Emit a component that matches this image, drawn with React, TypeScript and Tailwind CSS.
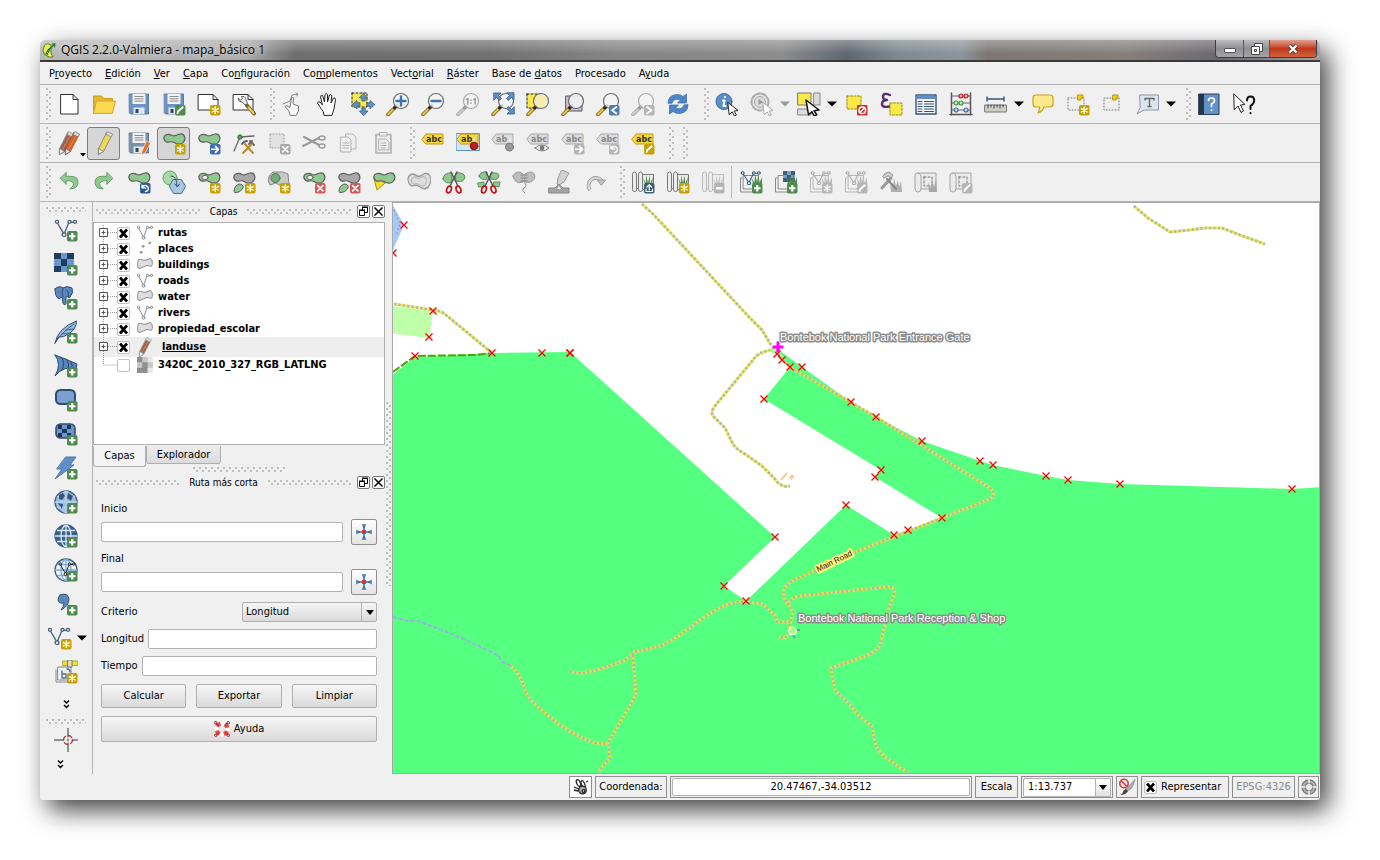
import React from 'react';
import type { ReactNode } from 'react';

type Tool = {
  label: string;
  icon?: ReactNode;
  kind?: 'handle' | 'drop' | 'dropOff' | 'line';
  pressed?: boolean;
  corner?: boolean;
};

const Icon = ({ children, size = 'size-6' }: { children: ReactNode; size?: string }) => (
  <svg viewBox="0 0 24 24" className={`${size} shrink-0`} fill="none" strokeLinecap="round" strokeLinejoin="round">
    {children}
  </svg>
);

const BLOB = 'M2 8C1 4 6 2 10 4.500C13 6 14 3.500 18 3C23 2.500 24 8 21.500 11C19.500 14 15 13.500 12 11.500C9 9.500 7 12 4.500 11Q2.500 10 2 8Z';
const VEC = 'M3 4.500L10 17L15 4.500H21';

const GREEN = '#8fc98f';
const GOLD = '#c8a000';
const OFF = '#b5b5b5';

// Small square in the lower right corner of an icon
const Badge = ({ c, s = 'star' }: { c: string; s?: 'star' | 'plus' | 'edit' | 'arrow' | 'x' | 'minus' | 'undo' | 'left' | 'right' | 'up' }) => (
  <g>
    <rect x="13" y="13" width="10.500" height="10.500" rx="1.800" fill={c} />
    <g stroke="#fff" strokeWidth="1.700">
      {s === 'star' && <path d="M18.250 15v6.500M15.300 16.600l5.900 3.400M21.200 16.600l-5.900 3.400" strokeWidth="1.400" />}
      {s === 'plus' && <path d="M18.250 15v6.500M15 18.250h6.500" strokeWidth="2.200" strokeLinecap="butt" />}
      {s === 'minus' && <path d="M15 18.250h6.500" strokeWidth="2.400" strokeLinecap="butt" />}
      {s === 'edit' && <path d="M15.600 21l.6-1.800 4.500-4" strokeWidth="2" />}
      {s === 'arrow' && <path d="M14.800 18.250h6.500M18.500 15.300l3 3-3 3" />}
      {s === 'x' && <path d="M15.600 15.600l5.300 5.300M20.900 15.600l-5.300 5.300" />}
      {s === 'undo' && <path d="M18.500 21.500a3 3 0 1 0-3-4M15 14.800v3h3M18.500 18.200h.2" strokeWidth="1.300" />}
      {s === 'left' && <path d="M20.500 15l-4.500 3.250 4.500 3.250" />}
      {s === 'right' && <path d="M16 15l4.500 3.250-4.500 3.250" />}
      {s === 'up' && <path d="M18.250 20v-5M16 17l2.250-2.300L20.500 17M15 19v2.500h6.500V19" strokeWidth="1.200" />}
    </g>
  </g>
);

const Sheet = () => (
  <path d="M1.500 2.500H16l5 5V18H1.500zM16 2.500v5h5" fill="#fff" stroke="#333" />
);

const Floppy = ({ c = '#6a93c3' }: { c?: string }) => (
  <g>
    <path d="M2.500 2h19v20H3.500l-1-1z" fill={c} stroke="#47698f" strokeWidth=".8" />
    <path d="M5.500 2h13v10h-13z" fill="#f2f2f2" />
    <path d="M7.500 4.500h9M7.500 6.800h9M7.500 9.100h9" stroke="#8b8b8b" strokeLinecap="butt" />
    <path d="M6.500 15.500h11V22h-11z" fill="#dfe5ec" />
    <path d="M8.500 17h3v4h-3z" fill="#2f4562" />
  </g>
);

const Blob = ({ c = GREEN, s = '#5c5c5c' }: { c?: string; s?: string }) => (
  <path d={BLOB} fill={c} stroke={s} strokeWidth="1.200" />
);

const Pencil = ({ c, dx = 0, tip = '#777' }: { c: string; dx?: number; tip?: string }) => (
  <g transform={`translate(${dx} 0)`}>
    <path d="M13 1.500l5 2.500-8.500 16.500-5 3 .3-6z" fill={c} stroke="#7d6a5c" strokeWidth=".7" />
    <path d="M4.800 17.500l4.700 3-5 3z" fill="#eee" stroke={tip} strokeWidth=".8" />
    <path d="M15.500 4L7.500 18.500" stroke="#fff" strokeOpacity=".35" strokeWidth=".8" />
    <path d="M13.500 1l-1.500 2.500 5 2.400L18.500 3.500z" fill="#d8dde2" stroke={tip} strokeWidth=".6" />
  </g>
);

const Lens = ({ off, children }: { off?: boolean; children?: ReactNode }) => (
  <g>
    <path d="M9.500 15L2 22.500" stroke={off ? '#aaa' : '#7b6523'} strokeWidth="3.600" />
    <path d="M9 15.500L2.200 22.300" stroke={off ? '#ccc' : '#f0c23c'} strokeWidth="2" />
    <path d="M11 13.500l-2.500 2.500" stroke={off ? '#999' : '#222'} strokeWidth="3" />
    <circle cx="15" cy="9" r="7.500" fill="#f4f4f6" fillOpacity=".85" stroke={off ? '#aaa' : '#6c6c6c'} strokeWidth="1.200" />
    {children}
  </g>
);

const Cursor = ({ off }: { off?: boolean }) => (
  <path d="M13 10.500l10 8-4 .6 2.400 3.900-2 1-2.200-4.200-2.700 2.800z" fill="#fff" stroke={off ? '#aaa' : '#222'} />
);

const Vec = ({ c = '#4a6178', t }: { c?: string; t?: string }) => (
  <g stroke={c} strokeWidth="1.300" transform={t}>
    <path d={VEC} />
    <circle cx="3" cy="4" r="1.600" fill="#eee" />
    <circle cx="10" cy="17.500" r="1.900" fill="#eee" />
    <circle cx="15.500" cy="4" r="1.600" fill="#eee" />
    <circle cx="21" cy="4" r="1.600" fill="#eee" />
  </g>
);

const Tag = ({ off, text = 'abc' }: { off?: boolean; text?: string }) => (
  <g>
    <path d="M1 8l4-5h17v10H5z" fill={off ? '#dcdcdc' : '#f5d93a'} stroke={off ? '#a8a8a8' : '#bd9a10'} />
    <text x="5" y="11" fontSize="8" fontWeight="bold" fontFamily="DejaVu Sans" fill={off ? '#888' : '#333'} className="select-none">
      {text}
    </text>
  </g>
);

const Maps = ({ off }: { off?: boolean }) => (
  <g stroke={off ? '#bbb' : '#777'} fill="#ececec">
    <path d="M11 4.500h11.500v15H11z" />
    <path d="M1.500 4q0-2 2-2t2 2v16q0 1.500-2 1.500t-2-1.500zM7.500 4q0-2 2-2t2 2v16q0 1.500-2 1.500t-2-1.500zM5.500 18.500h2" />
    <path d="M14 14l-2-6 3 5V5l2 8 2-8v9l3-7-1 8z" fill={off ? '#c4c4c4' : '#4f8a4f'} stroke="none" />
  </g>
);

const Grass = ({ c }: { c: string }) => (
  <path d="M14 15l-1-7 2.500 5L16 4l2 8 1.500-8 1 9L23 7v9z" fill={c} stroke="none" />
);

const Stack = ({ c = '#888' }: { c?: string }) => (
  <path d="M3 8H1.500v14H14M4.500 5.500h15V19h-15z" stroke={c} fill="none" />
);

const Roll = () => (
  <g stroke="#a4a4a4" fill="#ebebeb">
    <path d="M4 3h18v16H7V6q-1-3-3-3-3 0-3 2v14q0 3 3 3 3 0 3-3" />
    <path d="M10 7h8v9h-8z" strokeDasharray="2 2" stroke="#777" />
  </g>
);

const Globe = ({ fill = '#4c78ad', line = '#dce8f4' }: { fill?: string; line?: string }) => (
  <g stroke={line} strokeWidth="1.300">
    <circle cx="12" cy="12" r="11" fill={fill} stroke="#3c5f88" />
    <ellipse cx="12" cy="12" rx="5" ry="10.500" />
    <path d="M12 1.500v21M1.500 12h21M3.500 6.500h17M3.500 17.500h17" />
  </g>
);

const Scissors = () => (
  <g>
    <path d="M9 2l7 14M15 2L8 16" stroke="#555" strokeWidth="1.500" />
    <ellipse cx="7" cy="19.500" rx="2.200" ry="3.500" transform="rotate(20 7 19.500)" stroke="#c01818" strokeWidth="1.800" />
    <ellipse cx="16.500" cy="19.500" rx="2.200" ry="3.500" transform="rotate(-20 16.500 19.500)" stroke="#c01818" strokeWidth="1.800" />
  </g>
);

const UNDO = 'M8 3v4h5q9 0 8 8-1 6-9 6 5-3 4-6-1-3-5-3H8v4L1.500 9.500z';

const fileTools: Tool[] = [
  { label: 'Nuevo', icon: <path d="M4 2.500h12l5 5v14.500H4zM16 2.500v5h5" fill="#fff" stroke="#333" /> },
  { label: 'Abrir', icon: <><path d="M1.500 21V4h8l2 2.500h9V11" fill="#e5b82e" stroke="#c99b1c" /><path d="M1.500 21l3-12h19l-3 12z" fill="#fbd951" stroke="#d3a723" /></> },
  { label: 'Guardar', icon: <Floppy /> },
  { label: 'Guardar como', icon: <><Floppy /><Badge c="#4f8a4f" s="edit" /></> },
  { label: 'Nuevo diseñador', icon: <><Sheet /><Badge c={GOLD} /></> },
  { label: 'Administrador de diseñadores', icon: <><Sheet /><path d="M15 13.500l7 8" stroke="#7b6523" strokeWidth="4" /><path d="M16.500 15.500l5 5.500" stroke="#f0d060" strokeWidth="2" /><path d="M9.500 4.500q4-1 4.500 3l1.500 4-2.500 1.500-3-3q-4 0-4-4l2.500 2 2-1.500z" fill="#eee" stroke="#666" /></> },
  { label: 'h1', kind: 'handle' },
  { label: 'Desplazamiento táctil', icon: <><path d="M9 23l-1-4-4-4.500 1.500-1 3.500 2L10.500 6q1-2 2 0l-.5 6 5.500 2v5l-2 4z" fill="#fff" stroke="#777" /><path d="M2 12l7-3 2-6 5-1M15 1l2 1-1.500 2" stroke="#888" /></> },
  { label: 'Desplazar mapa', icon: <path d="M8 23q0-4-3-6.500L1.500 11Q2 9 4 10l2.500 3-2-8q0-2 2-1.500L8.500 10 9 2.500q1-2 2.500 0V10l2-7q1.500-1 2.300.5L15 11l2.500-5q2-.5 2 1.500L18 17l-2 6z" fill="#fff" stroke="#222" /> },
  { label: 'Desplazar a la selección', icon: <><path d="M1 1h15v14H1z" fill="#fbe94b" stroke="#222" strokeDasharray="2 2" /><path d="M12.500 1.500l4 4.500h-2.300v3h-3.400V6H8.500zM12.500 23.500l-4-4.500h2.300v-3h3.400v3h2.300zM1.500 12.500l4.500-4v2.300h3v3.400H6v2.300zM23.500 12.500l-4.500-4v2.300h-3v3.400h3v2.300z" fill="#5f8fc4" stroke="#2f5a8c" strokeWidth=".8" /></> },
  { label: 'Acercar zum', icon: <Lens><path d="M15 4.500v9M10.500 9h9" stroke="#3d73a8" strokeWidth="2.400" /></Lens> },
  { label: 'Alejar zum', icon: <Lens><path d="M10.500 9h9" stroke="#3d73a8" strokeWidth="2.400" /></Lens> },
  { label: 'Zum nativo', icon: <Lens off><path d="M10.500 7.500l1.300-1v5.500M17.800 7.500l1.300-1v5.500M15 8v.2M15 11v.2" stroke="#999" strokeWidth="1.500" /></Lens> },
  { label: 'Zum general', icon: <><Lens /><path d="M3 1h7L7.500 3.500l3 3-2 2-3-3L3 8zM23 1v7l-2.500-2.500-3 3-2-2 3-3L16 1zM23 22h-7l2.500-2.500-3-3 2-2 3 3L23 15z" fill="#5f8fc4" stroke="#2f5a8c" strokeWidth=".8" /></> },
  { label: 'Zum a la selección', icon: <><path d="M1 2h15v14H1z" fill="#fbe94b" stroke="#222" strokeDasharray="2 2" /><Lens><circle cx="15" cy="9" r="6" fill="#f5edb0" /></Lens></> },
  { label: 'Zum a la capa', icon: <><path d="M5 4h16v15H5z" fill="#c9c0cf" stroke="#5e5364" /><Lens /></> },
  { label: 'Zum anterior', icon: <><Lens /><Badge c="#4f7fb3" s="left" /></> },
  { label: 'Zum siguiente', icon: <><Lens off /><Badge c={OFF} s="right" /></> },
  { label: 'Actualizar', icon: <><path d="M2 11Q2 3 11 2.500q4 0 6 2L20.500 2v9h-9l3-3Q8 5.500 6 11z" fill="#4d86c8" stroke="#3668a6" strokeWidth=".7" /><path d="M22 13q0 8-9 8.500-4 0-6-2L3.500 22v-9h9l-3 3q6.500 2.500 8.500-3z" fill="#4d86c8" stroke="#3668a6" strokeWidth=".7" /></> },
  { label: 'h2', kind: 'handle' },
  { label: 'Identificar objetos', icon: <><circle cx="9" cy="9.500" r="8" fill="#5b8fc9" stroke="#3c6ca6" /><path d="M10 5v.2M8 8.500h1.500L8.500 14h2" stroke="#fff" strokeWidth="2" /><Cursor /></> },
  { label: 'Ejecutar acción', icon: <><circle cx="10" cy="10" r="8.500" stroke="#aaa" strokeWidth="2" strokeDasharray="4 2" fill="#e6e6e6" /><circle cx="10" cy="10" r="5.500" stroke="#aaa" fill="#ddd" /><path d="M8.500 7v6l4.500-3z" fill="#999" /><Cursor off /></> },
  { label: 'Acciones', kind: 'dropOff' },
  { label: 'Seleccionar objetos', icon: <><path d="M1 1h13v12H1z" fill="#fbe94b" stroke="#777" /><path d="M17 1h6v12h-6zM1 17h13v6H1z" fill="#dcdcdc" stroke="#888" /><path d="M9 8l13 10-5 .7 2.800 4-2.500 1.500-2.500-4.500-3.300 3z" fill="#fff" stroke="#111" strokeWidth="1.500" /></> },
  { label: 'Modos de selección', kind: 'drop' },
  { label: 'Deseleccionar todo', icon: <><path d="M3 4h14v13H3z" fill="#fbe94b" stroke="#a08a10" strokeDasharray="2 1.500" /><rect x="13" y="13" width="10.500" height="10.500" rx="1" fill="#d22f2f" /><circle cx="18.250" cy="18.250" r="3.300" stroke="#fff" strokeWidth="1.500" /><path d="M16 20.500l4.500-4.500" stroke="#fff" strokeWidth="1.500" /></> },
  { label: 'Seleccionar por expresión', icon: <><path d="M11 3Q4 0 4 5q0 2.500 4 3-5 0-5 4 0 4.500 9 2" stroke="#5c2d6e" strokeWidth="2.400" /><path d="M11 11h12v12H11z" fill="#fbe94b" stroke="#a08a10" strokeDasharray="2 1.500" /></> },
  { label: 'Abrir tabla de atributos', icon: <><path d="M2 3h20v19H2z" fill="#f2f4f8" stroke="#34557a" strokeWidth="1.400" /><path d="M2.500 3.500h19V7h-19z" fill="#5f8fc4" /><path d="M4 9.500h4M4 12h4M4 14.500h4M4 17h4M4 19.500h4M10.500 9.500h9M10.500 12h9M10.500 14.500h9M10.500 17h9M10.500 19.500h9" stroke="#34557a" /></> },
  { label: 'Calculadora de campos', icon: <><path d="M2.500 1v22M21.500 1v22M1 22.500h22" stroke="#555" strokeWidth="1.500" /><path d="M3 4h18M3 11h18M3 18h18" stroke="#666" /><g strokeWidth="1.200"><circle cx="12" cy="4" r="2" fill="#f4b0b0" stroke="#c01818" /><circle cx="17" cy="4" r="2" fill="#f4b0b0" stroke="#c01818" /><circle cx="7" cy="11" r="2" fill="#bfe6bf" stroke="#3d9a3d" /><circle cx="12" cy="11" r="2" fill="#bfe6bf" stroke="#3d9a3d" /><circle cx="7" cy="18" r="2" fill="#bcd8f0" stroke="#3c6ca6" /><circle cx="17" cy="18" r="2" fill="#bcd8f0" stroke="#3c6ca6" /></g></> },
  { label: 'Medir', icon: <><path d="M3 7h17M3 5v4M20 5v4" stroke="#34557a" strokeWidth="1.400" /><path d="M1 13h21.500v7H1z" fill="#cfcfc6" stroke="#777" /><path d="M4 13v3M7 13v2M10 13v3M13 13v2M16 13v3M19 13v2" stroke="#444" /></> },
  { label: 'Opciones de medida', kind: 'drop' },
  { label: 'Avisos del mapa', icon: <path d="M5 3h14q3 0 3 3v6q0 3-3 3h-6q-1 4-6 6 2-3 1.500-6H5q-3 0-3-3V6q0-3 3-3z" fill="#fbe98c" stroke="#caa21a" strokeWidth="1.200" /> },
  { label: 'Nuevo marcador', icon: <><path d="M2 6h16v12H2z" stroke="#777" strokeDasharray="1 2" /><path d="M12 3h5v3h-2v2h-3z" fill="#f5d000" stroke="#b59500" /><Badge c={GOLD} /></> },
  { label: 'Mostrar marcadores', icon: <><path d="M3 6h15v12H3z" stroke="#777" strokeDasharray="1 2" /><path d="M12 3h5v3h-2v2h-3z" fill="#f5d000" stroke="#b59500" /></> },
  { label: 'Anotación de texto', icon: <><path d="M4 3h18.500v15H8l-7 4 3-6z" fill="#dce4ee" stroke="#8d98a8" /><path d="M9 8V6.500h9V8M13.500 6.500v8M12 14.500h3" stroke="#666" strokeWidth="1.400" /></> },
  { label: 'Tipos de anotación', kind: 'drop' },
  { label: 'h3', kind: 'handle' },
  { label: 'Contenido de la ayuda', icon: <><path d="M2 2h20v20.500H2z" fill="#6292c6" stroke="#2c3f55" /><path d="M2 2h5v20.500H2z" fill="#23384f" /><path d="M11.500 8.500q0-2.500 3-2.500t3 2.500q0 2-3 3.500v2.500M14.500 18v.2" stroke="#fff" strokeWidth="1.700" /></> },
  { label: '¿Qué es esto?', icon: <><path d="M2 2l11 10.500-4.500.5L11.500 19 9 20.500 6 14l-3.500 3.500z" fill="#fff" stroke="#222" /><path d="M15 8.500q0-4 3.500-4 3.700 0 3.700 4 0 3-3.700 5.500v3M18.500 21v.3" stroke="#111" strokeWidth="2" /></> },
];

const editTools: Tool[] = [
  { label: 'Ediciones actuales', icon: <><Pencil c="#a0604a" dx={-2} /><Pencil c="#e05a1c" dx={4} tip="#555" /></>, corner: true },
  { label: 'Conmutar edición', icon: <Pencil c="#e6d84a" dx={2} />, pressed: true },
  { label: 'Guardar cambios de la capa', icon: <><Floppy c="#7d92a8" /><path d="M20 10l3.500 2L18 22l-3.500 2 .5-4z" fill="#e8702a" stroke="#fff" strokeWidth=".6" /></> },
  { label: 'Añadir objeto espacial', icon: <><Blob /><Badge c={GOLD} /></>, pressed: true },
  { label: 'Mover objeto espacial', icon: <><Blob /><Badge c="#3f6fae" s="arrow" /></> },
  { label: 'Herramienta de nodos', icon: <><path d="M2 20L8 6l14-1" stroke="#666" strokeWidth="1.300" /><circle cx="8" cy="6" r="2.200" fill="#5aa05a" stroke="#3a713a" /><path d="M13 13l8 9M19 14l-8 8" stroke="#c08a2a" strokeWidth="2" /><path d="M10 13q2-3 5-3M18 10l4 4M17 13l3-3" stroke="#666" strokeWidth="2" /></> },
  { label: 'Borrar lo seleccionado', icon: <><path d="M3 3h14v14H3z" stroke="#999" fill="#e2e2e2" strokeDasharray="1 2" /><Badge c="#a8a8a8" s="x" /></> },
  { label: 'Cortar objetos', icon: <g stroke="#999"><path d="M2 6l15 8M1 15l16-8" strokeWidth="2" /><ellipse cx="20" cy="7" rx="3" ry="2" strokeWidth="1.500" /><ellipse cx="20" cy="15" rx="3" ry="2" strokeWidth="1.500" /></g> },
  { label: 'Copiar objetos', icon: <g fill="#eee" stroke="#b5b5b5"><path d="M9 3h7l3 3v12H9z" /><path d="M4 6h7l3 3v12H4z" /><path d="M6 12h6M6 14.500h6M6 17h6" /></g> },
  { label: 'Pegar objetos', icon: <g fill="#eee" stroke="#b0b0b0"><path d="M4 3.500h15V22H4z" strokeWidth="1.600" /><path d="M8 1.500h7V5H8zM7 8h7l3 3v8H7z" /><path d="M9 12h5M9 14.500h5M9 17h4" /></g> },
  { label: 'h4', kind: 'handle' },
  { label: 'Opciones de etiquetado', icon: <Tag /> },
  { label: 'Fijar etiquetas', icon: <><path d="M.5 2.500h23v17H.5z" fill="#d7e4f5" stroke="#5f94d0" /><Tag text="ab" /><path d="M18 7v6" stroke="#ddd" strokeWidth="2" /><circle cx="18" cy="15" r="3.800" fill="#c02020" stroke="#801010" /></> },
  { label: 'Soltar etiquetas', icon: <><Tag off text="ab" /><path d="M19 8v6" stroke="#eee" strokeWidth="2" /><circle cx="18.500" cy="16" r="4" fill="#999" stroke="#777" /></> },
  { label: 'Mostrar etiquetas', icon: <><Tag off /><path d="M9 17q7-6 14 0-7 6-14 0z" fill="#eee" stroke="#777" /><circle cx="16" cy="17" r="2.300" fill="#777" /></> },
  { label: 'Mover etiqueta', icon: <><Tag off /><Badge c={OFF} s="arrow" /></> },
  { label: 'Rotar etiqueta', icon: <><Tag off /><Badge c={OFF} s="undo" /></> },
  { label: 'Cambiar etiqueta', icon: <><Tag /><Badge c={GOLD} s="edit" /></> },
  { label: 'h5', kind: 'handle' },
  { label: 'h6', kind: 'handle' },
];

const advTools: Tool[] = [
  { label: 'Deshacer', icon: <path d={UNDO} fill={GREEN} stroke="#4f8f57" strokeWidth=".9" transform="translate(2 0) scale(.9)" /> },
  { label: 'Rehacer', icon: <path d={UNDO} fill={GREEN} stroke="#4f8f57" strokeWidth=".9" transform="translate(22 0) scale(-.9 .9)" /> },
  { label: 'Rotar objetos', icon: <><Blob /><Badge c="#2c5a94" s="undo" /></> },
  { label: 'Simplificar objeto', icon: <><circle cx="8" cy="8" r="7" fill="#a9dba9" stroke="#5f9f66" /><path d="M12 9.500h8l4 7-4 7h-8l-4-7z" fill="#a8c8e0" stroke="#4a6f90" transform="translate(-.5 0)" /><path d="M9 6q6 0 6 10M13 14l2.300 3 2.200-3" stroke="#35506e" /></> },
  { label: 'Añadir anillo', icon: <><Blob /><ellipse cx="8" cy="7.500" rx="3.200" ry="2" fill="#fff" stroke="#5c5c5c" /><Badge c={GOLD} /></> },
  { label: 'Añadir parte', icon: <><Blob c="#a8a8a8" /><path d="M2 21q0-5 5-7 5 0 4 4-3 5-8 4.500z" fill={GREEN} stroke="#5c5c5c" /><Badge c={GOLD} /></> },
  { label: 'Rellenar anillo', icon: <><path d="M2 7q2-6 8-5 6-1 11 2l1 12-8 0-5-3-6 2q-3-4-1-8z" fill="#c8c8c8" stroke="#888" /><circle cx="8.500" cy="8" r="4.500" fill="#6fae79" stroke="#4c7a54" /><Badge c={GOLD} /></> },
  { label: 'Borrar anillo', icon: <><Blob /><ellipse cx="8" cy="7.500" rx="3.200" ry="2" fill="#fff" stroke="#5c5c5c" /><Badge c="#d05a5a" s="x" /></> },
  { label: 'Borrar parte', icon: <><Blob c="#a8a8a8" /><path d="M2 21q0-5 5-7 5 0 4 4-3 5-8 4.500z" fill={GREEN} stroke="#5c5c5c" /><Badge c="#d05a5a" s="x" /></> },
  { label: 'Remodelar objetos', icon: <><path d="M2 9l3 11 8-7z" fill="#f7d935" stroke="#b59500" /><Blob /></> },
  { label: 'Curva de desplazamiento', icon: <><path d={BLOB} fill="#ddd" stroke="#999" transform="translate(-1 -1) scale(1.080 1.500)" /><path d={BLOB} stroke="#aaa" transform="translate(3 4) scale(.72 .9)" /></> },
  { label: 'Dividir objetos', icon: <><path d="M1 9q1-7 9-6v9q-6 3-9-3zM14 3q8-1 9 4-1 6-9 4z" fill={GREEN} stroke="#5c8c60" /><Scissors /></> },
  { label: 'Dividir partes', icon: <><path d="M2 6q2-5 8-4v7q-6 2-8-3zM14 3q8-1 8 3-1 5-8 3zM1 13l6-1v5H2zM17 12h6l-1 5-5-1z" fill={GREEN} stroke="#5c8c60" /><Scissors /></> },
  { label: 'Combinar objetos', icon: <><path d="M1 6q4-7 10-2v8Q3 15 1 6zM13 4q8-5 10 2-1 8-10 6z" fill="#bdbdbd" stroke="#999" /><path d="M9 5h6M9 8h6M9 11h6M12 12q4 4 0 6-3 2 1 5" stroke="#888" /></> },
  { label: 'Combinar atributos', icon: <><path d="M15 0l7 3-5 9-5 3-2-1 1-6z" fill="#d2d2d2" stroke="#999" /><path d="M2 18h6l4-4 4 4h6v5H2z" fill="#a4a4a4" stroke="#888" /><path d="M12 16l2 3h-4z" fill="#eee" /></> },
  { label: 'Rotar símbolos', icon: <><path d="M8 20a7.500 7.500 0 1 1 12-9" stroke="#999" strokeWidth="3.800" strokeLinecap="butt" /><path d="M8 20a7.500 7.500 0 1 1 12-9" stroke="#d8d8d8" strokeWidth="2.200" strokeLinecap="butt" /><path d="M15.500 10h8l-4 5z" fill="#c4c4c4" stroke="#999" /></> },
  { label: 'h7', kind: 'handle' },
  { label: 'Abrir conjunto de mapas', icon: <><Maps /><Badge c="#3a5f7a" s="up" /></> },
  { label: 'Nuevo conjunto de mapas', icon: <><Maps /><Badge c={GOLD} /></> },
  { label: 'Cerrar conjunto de mapas', icon: <><Maps off /><Badge c={OFF} s="minus" /></> },
  { label: 's1', kind: 'line' },
  { label: 'Añadir vectorial GRASS', icon: <><Stack /><Vec c="#3a5f7a" t="translate(1 0) scale(.9 .75)" /><Grass c="#4f8a4f" /><Badge c="#4f8a4f" s="plus" /></> },
  { label: 'Añadir ráster GRASS', icon: <><Stack /><path d="M9 1h12v11H9z" fill="#3a5f7a" /><path d="M13 1h4v4h-4zM9 5h4v3H9zM17 5h4v3h-4z" fill="#7ba0bc" /><Grass c="#4f8a4f" /><Badge c="#4f8a4f" s="plus" /></> },
  { label: 'Nuevo vectorial GRASS', icon: <><Stack c={OFF} /><Vec c="#aaa" t="translate(1 0) scale(.9 .75)" /><Grass c="#bbb" /><Badge c={OFF} /></> },
  { label: 'Editar vectorial GRASS', icon: <><Stack c={OFF} /><Vec c="#aaa" t="translate(1 0) scale(.9 .75)" /><Grass c="#bbb" /><Badge c={OFF} s="edit" /></> },
  { label: 'Herramientas GRASS', icon: <><path d="M12 22l-1-11 3 6 1-9 2 8 2-6 1 7 2-6 1 11z" fill="#b0b0b0" /><path d="M3 18l9-10" stroke="#999" strokeWidth="3" /><path d="M4 6q2-4 6-4l4 3-2 3-3-2-4 2z" fill="#ccc" stroke="#999" /><path d="M8 9l9 10" stroke="#888" strokeWidth="2" /></> },
  { label: 'Mostrar región', icon: <><Roll /><path d="M15 22l-1-10 3 6 1-9 2 8 2-8 1 13z" fill="#a8a8a8" /></> },
  { label: 'Editar región', icon: <><Roll /><Badge c={OFF} s="edit" /></> },
];

const Plus = <Badge c="#4f8a4f" s="plus" />;

const layerTools: Tool[] = [
  { label: 'Añadir capa vectorial', icon: <><Vec t="scale(1 .95)" />{Plus}</> },
  { label: 'Añadir capa ráster', icon: <><path d="M0 1h20v19H0z" fill="#6a96c9" /><path d="M0 1h7v6H0zM13 1h7v6h-7zM7 7h6v7H7zM0 14h7v6H0zM13 14h7v6h-7z" fill="#1f3d63" />{Plus}</> },
  { label: 'Añadir capa PostGIS', icon: <><path d="M1 3q4-4 8-1 4-3 9 0 2 5-2 9l-1 1-1-2-2 1v7q-2 2-3-1l-1-6-3 2Q1 11 1 3z" fill="#5b88bb" stroke="#2c4d75" /><path d="M9 2q-2 5 0 9M13 4q3 3 1 7M5 6v.2" stroke="#2c4d75" />{Plus}</> },
  { label: 'Añadir capa SpatiaLite', icon: <><path d="M1 23Q4 8 22.500 1q0 8-8 13Q9 18 5 17z" fill="#9dbde0" stroke="#2c4d75" /><path d="M1 23Q8 12 20 4M8 14l8-1M12 10l7-1" stroke="#3d5f88" />{Plus}</> },
  { label: 'Añadir capa MSSQL', icon: <><path d="M1 1q11 4 22 9l-1 5q-12-4-21 7 7-12 0-21z" fill="#5b88bb" stroke="#2c4d75" /><path d="M7 3q5 6 1 13M12 5q4 5 2 9M17 8q2 3 1 7" stroke="#24466e" />{Plus}</> },
  { label: 'Añadir capa Oracle', icon: <><rect x="2" y="2" width="19" height="14" rx="4.500" fill="#7ba0d0" stroke="#2c4d75" strokeWidth="2" />{Plus}</> },
  { label: 'Añadir GeoRaster', icon: <><rect x="2" y="2" width="19" height="14" rx="4.500" fill="#6a96c9" stroke="#2c4d75" strokeWidth="1.600" /><path d="M4 3h4v4H4zM13 3h4v4h-4zM8 7h5v4H8zM4 11h4v4H4zM13 11h4v4h-4z" fill="#1f3557" />{Plus}</> },
  { label: 'Añadir capa SQL Anywhere', icon: <><path d="M12 1h10l-6 8h4L1 23l7-10H3z" fill="#5f8fc8" stroke="#4a78ae" />{Plus}</> },
  { label: 'Añadir capa WMS', icon: <><Globe fill="#9dbde0" line="#b9d0e8" /><path d="M5 5l4-2 2 3-3 4-3-1zM14 3l5 3-2 5-4-3zM4 13l5 1-1 5zM14 13l4 1-2 4z" fill="#35567c" />{Plus}</> },
  { label: 'Añadir capa WCS', icon: <><Globe fill="#35608f" />{Plus}</> },
  { label: 'Añadir capa WFS', icon: <><Globe fill="#f2f6fb" line="#7fa8d4" /><Vec c="#222" t="translate(4 3) scale(.75)" />{Plus}</> },
  { label: 'Añadir texto delimitado', icon: <><path d="M6 3q8-3 9 4 0 7-8 11 3-4 3-7-5 1-6-3 0-3 2-5z" fill="#5b88bb" stroke="#35567c" />{Plus}</> },
  { label: 'Nueva capa', icon: <><Vec t="translate(-1 0) scale(1 .95)" /><Badge c={GOLD} /></> },
  { label: 'Capa GPX', icon: <><path d="M2 10v12h13M4 7h13v13H4z" stroke="#888" /><path d="M9 1h15v4.500H9z" fill="#f0e020" stroke="#a89c10" strokeWidth=".8" /><path d="M14 0h4v7h-4z" fill="#ddd" stroke="#666" strokeWidth=".8" /><path d="M8 11v7h4v-4H8M13 9q3 0 3 3" stroke="#456c94" strokeWidth="1.300" /><Badge c={GOLD} /></> },
];

const DOTS_V = 'h-8 w-[5px] shrink-0 self-center bg-[radial-gradient(circle_at_1px_1px,#bdbdbd_1px,transparent_1px),radial-gradient(circle_at_4px_4px,#bdbdbd_1px,transparent_1px)] bg-[length:6px_6px]';
const DOTS_H = 'h-[5px] bg-[radial-gradient(circle_at_1px_1px,#bdbdbd_1px,transparent_1px),radial-gradient(circle_at_4px_4px,#bdbdbd_1px,transparent_1px)] bg-[length:6px_6px]';

const Caret = ({ off }: { off?: boolean }) => (
  <svg viewBox="0 0 10 6" className="h-[6px] w-[10px]">
    <path d="M0 .500h10L5 5.500z" fill={off ? '#9a9a9a' : '#000'} />
  </svg>
);

const Toolbar = ({ tools, label }: { tools: Tool[]; label: string }) => (
  <div role="toolbar" aria-label={label} className="flex h-[39px] items-center border-t border-[#b4b4b4] pl-[6px]">
    <span className={DOTS_V} />
    {tools.map((t) => {
      if (t.kind === 'handle') return <span key={t.label} className={`${DOTS_V} ml-[9px]`} />;
      if (t.kind === 'line') return <span key={t.label} className="mx-px h-8 w-px bg-[#b8b8b8]" />;
      if (t.kind === 'drop' || t.kind === 'dropOff') {
        return (
          <button key={t.label} aria-label={t.label} className="flex h-8 w-3 shrink-0 items-center justify-center">
            <Caret off={t.kind === 'dropOff'} />
          </button>
        );
      }
      return (
        <button
          key={t.label}
          aria-label={t.label}
          aria-pressed={t.pressed}
          className={
            t.pressed
              ? 'mx-px flex h-[33px] w-[33px] shrink-0 items-center justify-center rounded-[3px] border border-[#7d7d7d] bg-[#d6d6d6]'
              : 'relative flex h-8 w-[35px] shrink-0 items-center justify-center'
          }
        >
          <Icon>{t.icon}</Icon>
          {t.corner && (
            <svg viewBox="0 0 6 4" className="absolute right-0 bottom-[2px] h-1 w-[6px]">
              <path d="M0 0h6L3 3.500z" />
            </svg>
          )}
        </button>
      );
    })}
  </div>
);

// [text before the mnemonic, mnemonic, rest]
const menus = [
  ['P', 'r', 'oyecto'],
  ['', 'E', 'dición'],
  ['', 'V', 'er'],
  ['', 'C', 'apa'],
  ['Co', 'n', 'figuración'],
  ['Co', 'm', 'plementos'],
  ['Vect', 'o', 'rial'],
  ['', 'R', 'áster'],
  ['Base de ', 'd', 'atos'],
  ['Procesado', '', ''],
  ['A', 'y', 'uda'],
];

type Layer = { name: string; type: 'line' | 'point' | 'poly' | 'edit' | 'raster'; on: boolean };

const layers: Layer[] = [
  { name: 'rutas', type: 'line', on: true },
  { name: 'places', type: 'point', on: true },
  { name: 'buildings', type: 'poly', on: true },
  { name: 'roads', type: 'line', on: true },
  { name: 'water', type: 'poly', on: true },
  { name: 'rivers', type: 'line', on: true },
  { name: 'propiedad_escolar', type: 'poly', on: true },
  { name: 'landuse', type: 'edit', on: true },
  { name: '3420C_2010_327_RGB_LATLNG', type: 'raster', on: false },
];

const layerIcon = {
  line: <Icon size="size-4"><Vec c="#8a8a8a" t="translate(-1 -1) scale(1.080 1.150)" /></Icon>,
  point: <Icon size="size-4"><g stroke="#888" strokeWidth="1.500"><circle cx="6" cy="17" r="1.500" /><circle cx="9" cy="8" r="1.500" /><circle cx="19" cy="3" r="1.500" /></g></Icon>,
  poly: <Icon size="size-4"><path d="M2 4q3-2 8 1 6 0 10-3 4 3 3 9-1 4-3 3-3-2-6-1-5 2-9 4-4 1-4-3z" fill="#dedede" stroke="#8a8a8a" strokeWidth="1.500" /></Icon>,
  edit: <Icon size="size-5"><Pencil c="#a5644a" dx={1} tip="#6fa0d0" /></Icon>,
  raster: <Icon size="size-4"><path d="M0 0h24v24H0z" fill="#c8c8c8" /><path d="M0 0h8v8H0zM8 8h8v8H8zM0 16h16v8H0z" fill="#8f8f8f" /><path d="M16 0h8v8h-8zM16 16h8v8h-8z" fill="#e8e8e8" /></Icon>,
};

const CheckBox = ({ id, on, label }: { id: string; on: boolean; label: string }) => (
  <span className="grid size-[13px] shrink-0 place-items-center">
    <input
      id={id}
      type="checkbox"
      aria-label={label}
      defaultChecked={on}
      className="peer col-start-1 row-start-1 size-[13px] appearance-none rounded-[2px] border border-[#c0c0c0] bg-white"
    />
    <svg viewBox="0 0 9 9" className="pointer-events-none col-start-1 row-start-1 hidden size-[9px] peer-checked:block">
      <path d="M1 .500l7 8M8 .500l-7 8" stroke="#000" strokeWidth="2.800" />
    </svg>
  </span>
);

const LayerRow = ({ layer, last }: { layer: Layer; last: boolean }) => {
  const editing = layer.type === 'edit';
  return (
    <li className={`flex items-center pl-[5px] ${editing ? 'h-5 bg-[#eeeeee]' : 'h-4'}`}>
      <svg viewBox="0 0 18 20" className="h-full w-[18px] shrink-0" fill="none" stroke="#9a9a9a" preserveAspectRatio="xMidYMid slice">
        <path d={last ? 'M4.500 0v10H18' : 'M4.500 0v20M9 9.500h9'} strokeDasharray="1 1" />
        {!last && <path d="M.500 5.500h8v8h-8zM2.500 9.500h4M4.500 7.500v4" fill="#fff" stroke="#555" />}
      </svg>
      <CheckBox id={`layer-${layer.name}`} on={layer.on} label={layer.name} />
      <span className="ml-[3px] flex w-6 shrink-0 items-center justify-center">{layerIcon[layer.type]}</span>
      <label htmlFor={`layer-${layer.name}`} className={`ml-px text-[11px] font-bold ${editing ? 'pl-1 underline' : ''}`}>
        {layer.name}
      </label>
    </li>
  );
};

const DockHeader = ({ title }: { title: string }) => (
  <div className="flex h-[18px] items-center gap-[2px] pl-[3px]">
    <div className={`${DOTS_H} flex-1`} />
    <h2 className="px-2 text-[10px]">{title}</h2>
    <div className={`${DOTS_H} mr-1 flex-1`} />
    <button aria-label={`Desacoplar ${title}`} className="size-[13px] rounded-[2px] border border-[#777] bg-white">
      <svg viewBox="0 0 11 11" className="size-[11px]" fill="none" stroke="#000">
        <path d="M4.500 4V1.500h5v5H7M4 1h6M1.500 4.500h5v5h-5zM1 4h6" />
      </svg>
    </button>
    <button aria-label={`Cerrar ${title}`} className="size-[13px] rounded-[2px] border border-[#777] bg-white">
      <svg viewBox="0 0 11 11" className="size-[11px]" fill="none" stroke="#000" strokeWidth="1.500">
        <path d="M1.500 1.500l8 8M9.500 1.500l-8 8" />
      </svg>
    </button>
  </div>
);

const FIELD = 'h-5 min-w-0 flex-1 rounded-[2px] border border-[#b3b3b3] bg-white px-1 text-[11px]';
const BUTTON = 'flex items-center justify-center rounded-[2px] border border-[#b0b0b0] bg-linear-to-b from-[#f6f6f6] to-[#dadada] text-[11px]';

const PickPoint = ({ label }: { label: string }) => (
  <button aria-label={label} className="flex size-[26px] shrink-0 items-center justify-center rounded-[2px] border border-[#909090] bg-linear-to-b from-white to-[#e4e4e4]">
    <svg viewBox="0 0 16 16" className="size-4">
      <path d="M8 0v16M0 8h16" stroke="#3d9be0" strokeWidth="2" />
      <path d="M6 0l2 4 2-4M6 16l2-4 2 4M0 6l4 2-4 2M16 6l-4 2 4 2" fill="none" stroke="#555" strokeWidth=".8" />
      <path d="M6 6h4v4H6z" fill="#e03030" />
    </svg>
  </button>
);

const RoutePanel = () => (
  <form className="flex flex-col px-2 text-[11px]" onSubmit={(e) => e.preventDefault()}>
    <label htmlFor="inicio" className="mt-[10px] leading-4">Inicio</label>
    <div className="mt-[2px] flex items-center gap-2">
      <input id="inicio" className={FIELD} />
      <PickPoint label="Elegir inicio" />
    </div>
    <label htmlFor="final" className="mt-[6px] leading-4">Final</label>
    <div className="mt-[2px] flex items-center gap-2">
      <input id="final" className={FIELD} />
      <PickPoint label="Elegir final" />
    </div>
    <div className="mt-[7px] flex items-center justify-between">
      <label htmlFor="criterio">Criterio</label>
      <div className="grid h-5 w-[135px]">
        <select id="criterio" className="col-start-1 row-start-1 appearance-none rounded-[2px] border border-[#b0b0b0] bg-linear-to-b from-[#f6f6f6] to-[#dadada] px-[3px] text-[11px]">
          <option>Longitud</option>
        </select>
        <span className="pointer-events-none col-start-1 row-start-1 flex w-4 items-center justify-center justify-self-end border-l border-[#b0b0b0]">
          <svg viewBox="0 0 10 6" className="h-[5px] w-2"><path d="M0 0h10L5 6z" /></svg>
        </span>
      </div>
    </div>
    <div className="mt-[7px] flex items-center gap-1">
      <label htmlFor="longitud">Longitud</label>
      <input id="longitud" className={FIELD} />
    </div>
    <div className="mt-[7px] flex items-center gap-1">
      <label htmlFor="tiempo">Tiempo</label>
      <input id="tiempo" className={FIELD} />
    </div>
    <div className="mt-2 grid grid-cols-3 gap-[10px]">
      <button className={`${BUTTON} h-6`}>Calcular</button>
      <button className={`${BUTTON} h-6`}>Exportar</button>
      <button className={`${BUTTON} h-6`}>Limpiar</button>
    </div>
    <button className={`${BUTTON} mt-2 h-[26px] gap-1`}>
      <svg viewBox="0 0 16 16" className="size-4" fill="none">
        <circle cx="8" cy="8" r="5.500" stroke="#fff" strokeWidth="4" />
        <circle cx="8" cy="8" r="5.500" stroke="#e85050" strokeWidth="4" strokeDasharray="4.300 4.340" strokeDashoffset="-2.200" />
        <path d="M2 2l3 3M14 2l-3 3M2 14l3-3M14 14l-3-3" stroke="#d83030" strokeWidth="1.500" />
        <g stroke="#a03030"><circle cx="1.800" cy="1.800" r="1.300" /><circle cx="14.200" cy="1.800" r="1.300" /><circle cx="1.800" cy="14.200" r="1.300" /><circle cx="14.200" cy="14.200" r="1.300" /></g>
      </svg>
      Ayuda
    </button>
  </form>
);

const roads = [
  'M642 204L653 214L750 318L762 330L771 345',
  'M780 349L771 350Q758 352 753 360L714 407Q710 414 714 417L725 428L733 444Q736 449 745 454L762 466L775 479Q781 488 790 486',
  'M776 350L781 358L790 367L876 417L990 488Q997 494 990 499L942 518L860 550L790 582Q782 588 784 598L793 612L790 625Q789 638 783 638L779 637',
  'M788 605Q790 598 800 596L885 587Q894 586 895 592L889 608L880 645Q877 651 868 655L831 668L835 690L850 705L860 717L872 726L874 738Q876 750 885 757L907 772',
  'M570 671Q578 676 600 669L624 661L634 652L660 646Q678 638 700 620Q728 600 745 602Q757 602 764 605L771 612L775 615L777 622L790 622',
  'M633 655L636 695L608 743L610 758L598 772',
  'M510 665Q520 672 525 690Q530 702 545 713Q570 735 595 743L608 744',
  'M394 304L433 310Q442 311 446 315L492 353',
  'M1134 206L1148 218L1170 232Q1190 230 1205 228L1222 228L1240 235L1265 244',
];

const vertices = [
  [404, 225], [393, 253], [433, 311], [429, 337], [415, 356], [492, 353], [542, 353], [570, 353], [570, 353],
  [777, 354], [782, 360], [790, 367], [802, 367], [764, 399], [851, 402], [876, 417], [922, 441], [980, 461],
  [993, 465], [1046, 476], [1068, 480], [1120, 484], [1292, 489], [881, 470], [875, 477], [942, 518], [908, 530],
  [894, 535], [846, 505], [775, 537], [724, 586], [746, 601],
];

const MapCanvas = () => (
  <svg
    role="img"
    aria-label="Mapa"
    viewBox="393 203 926 570"
    preserveAspectRatio="xMinYMin slice"
    className="h-full w-full"
    fill="none"
    fontFamily="'Liberation Sans', Arial, sans-serif"
  >
    <path
      fill="#55ff80"
      d="M390 377L415 357L492 353L570 352L775 537L724 586L746 601L846 505L894 535L942 518L875 477L881 470L764 399L790 367L776 348L802 367L851 402L876 417L922 441L980 461L993 465L1046 476L1068 480L1120 484L1292 489L1325 487V780H390Z"
    />
    <path d="M390 306L433 311L429 338L390 333z" fill="#bfffaa" />
    <path d="M390 200L404 225L393 250z" fill="#aac8fa" />
    <path d="M394 210L400 224L396 236" stroke="#6ea59c" strokeDasharray="2 2" />
    <path d="M393 372L415 356L475 355L492 353" stroke="#50a000" strokeWidth="2" strokeDasharray="8 2" />
    <path d="M393 617L408 621L418 621L450 633L498 655L502 662L510 665" stroke="#a6a6f0" strokeWidth="2" strokeDasharray="4 2" />
    {roads.map((d) => (
      <g key={d}>
        <path d={d} stroke="#eeee28" strokeWidth="3" strokeOpacity=".8" />
        <path d={d} stroke="#b4b4b4" strokeWidth="2.600" strokeDasharray="2.400 2" />
      </g>
    ))}
    <path d="M781 480L787 473" stroke="#ffc88a" strokeWidth="2" />
    <path d="M789 477l3-2.500 2.500 1.500-3 4z" fill="#ffc88a" />
    {vertices.map(([x, y], i) => (
      <path key={i} d={`M${x - 3.5} ${y - 3.5}l7 7M${x + 3.5} ${y - 3.5}l-7 7`} stroke="#f00" strokeWidth="1.300" />
    ))}
    <circle cx="773" cy="350" r="3" fill="#aaff80" />
    <path d="M778 341.500v11M772.500 347h11" stroke="#f0f" strokeWidth="3" />
    <path d="M795 630h5M792 634l3 4" stroke="#6e96a0" strokeWidth="2" />
    <circle cx="792.500" cy="631" r="4" fill="#aaff80" stroke="#fff" />
    <g fontSize="11" fill="#fff" stroke="#8c8c8c" strokeWidth="3" strokeLinejoin="round" paintOrder="stroke">
      <text x="780" y="341">Bontebok National Park Entrance Gate</text>
      <text x="798" y="622">Bontebok National Park Reception &amp; Shop</text>
    </g>
    <text x="818" y="572" fontSize="8" fill="#222" stroke="#fff078" strokeWidth="4" strokeLinejoin="round" paintOrder="stroke" transform="rotate(-26 818 572)">
      Main Road
    </text>
  </svg>
);

const More = ({ label }: { label: string }) => (
  <button aria-label={label} className="flex w-full justify-center">
    <svg viewBox="0 0 7 9" className="h-[9px] w-[7px]" fill="none" stroke="#000" strokeWidth="1.400">
      <path d="M1 .500l2.500 2.500L6 .500M1 5l2.500 2.500L6 5" />
    </svg>
  </button>
);

const BOX = 'flex h-[22px] items-center border border-[#8f8f8f] text-[11px]';

const StatusBar = () => (
  <footer className="flex h-[26px] items-center justify-end gap-[3px] pr-px">
    <button aria-label="Conmutar extensión" className={`${BOX} w-[23px] justify-center bg-white`}>
      <svg viewBox="0 0 16 16" className="size-4" fill="none" stroke="#222" strokeWidth="1.300">
        <ellipse cx="5.500" cy="4" rx="1.800" ry="3.500" transform="rotate(-25 5.500 4)" />
        <ellipse cx="10" cy="5" rx="1.600" ry="3.500" transform="rotate(-25 10 5)" />
        <circle cx="9.500" cy="11" r="3.800" fill="#aaa" />
        <circle cx="10.500" cy="12" r="1.300" fill="#fff" />
        <path d="M1 8l5 2M13 3l2-1M1 11l4 1" />
      </svg>
    </button>
    <label htmlFor="coord" className={`${BOX} w-[72px] justify-center`}>Coordenada:</label>
    <span className="flex h-[22px] w-[302px] border border-[#8f8f8f] p-px">
      <input id="coord" defaultValue="20.47467,-34.03512" className="w-full rounded-[2px] border border-[#b3b3b3] bg-white text-center text-[11px]" />
    </span>
    <label htmlFor="scale" className={`${BOX} w-[43px] justify-center`}>Escala</label>
    <span className="grid h-[22px] w-[92px] border border-[#8f8f8f] p-px">
      <select id="scale" className="col-start-1 row-start-1 min-w-0 appearance-none rounded-[2px] border border-[#b3b3b3] bg-white px-1 text-[11px]">
        <option>1:13.737</option>
      </select>
      <span className="pointer-events-none col-start-1 row-start-1 flex w-4 items-center justify-center justify-self-end border border-[#b3b3b3] bg-linear-to-b from-white to-[#e0e0e0]">
        <svg viewBox="0 0 10 6" className="h-[5px] w-2"><path d="M0 0h10L5 6z" /></svg>
      </span>
    </span>
    <button aria-label="Detener representación" className={`${BOX} w-[22px] justify-center`}>
      <svg viewBox="0 0 18 18" className="size-[18px]" fill="none">
        <path d="M17 1Q15 12 9 13L7 11Q13 7 17 1z" fill="#aaa" stroke="#888" strokeWidth=".6" />
        <path d="M8 11l2 2q-2 4-8 4 3-1 3-3t3-3z" fill="#444" />
        <circle cx="6" cy="5.500" r="4.200" stroke="#d83a3a" strokeWidth="1.600" />
        <path d="M3 2.500l6 6" stroke="#d83a3a" strokeWidth="1.600" />
      </svg>
    </button>
    <div className={`${BOX} w-[88px] gap-1 pl-[2px]`}>
      <CheckBox id="render" on label="Representar" />
      <label htmlFor="render">Representar</label>
    </div>
    <span className={`${BOX} w-[63px] justify-center text-[#8a8a8a]`}>EPSG:4326</span>
    <button aria-label="Estado del SRC" className={`${BOX} w-[21px] justify-center`}>
      <svg viewBox="0 0 18 18" className="size-[18px]" fill="none" stroke="#7a7a7a" strokeWidth="1.400">
        <circle cx="9" cy="9" r="7" fill="#b4b4b4" />
        <circle cx="9" cy="9" r="3.800" fill="#eee" />
        <path d="M9 1v4.500M9 12.500V17M1 9h4.500M12.500 9H17" stroke="#ddd" strokeWidth="2" />
      </svg>
    </button>
  </footer>
);

const TitleBar = () => (
  <header className="flex h-[22px] shrink-0 items-start rounded-t-md border-b-2 border-[#3a3a3a] bg-[linear-gradient(to_bottom,rgba(255,255,255,0.3),transparent_70%),linear-gradient(to_right,#b8b8b8,#a8a8a8_16%,#6e6e6e_20%,#707070_35%,#858585_45%,#8c8c8c_58%,#5e6670_63%,#7d8a92_67%,#8d949c_72%,#7c7774_74%,#857f7c_85%,#6c6870_92%,#a0a0a0)]">
    <svg viewBox="0 0 16 16" className="mt-[2px] ml-px size-4" fill="none">
      <path d="M3 5q1-4 5-3l2 1v8l2 4H8l-5-3q-2-4 0-7z" fill="#e8ee58" stroke="#6d7a14" />
      <path d="M4 12Q7 6 12 3l-2-1 4.500-1-.5 5-1.500-2Q8 8 7 13z" fill="#1f7a2a" />
      <path d="M6 10l4 4" stroke="#fff" />
    </svg>
    <h1 className="ml-1 font-['Open_Sans','Noto_Sans',sans-serif] text-[12px] leading-5 text-black [text-shadow:0_0_6px_#ddd,0_0_10px_#ddd]">
      QGIS 2.2.0-Valmiera - mapa_básico 1
    </h1>
    <div className="mr-[3px] ml-auto flex h-[18px] overflow-hidden rounded-b-[4px] border border-t-0 border-[#3c3c44]">
      <button aria-label="Minimizar" className="flex w-7 items-end justify-center border-r border-[#55555c] bg-linear-to-b from-[#bcbcc0] via-[#8e8e94] to-[#a4a4a8] pb-1">
        <span className="h-[5px] w-3 rounded-[1px] border border-[#55555c] bg-white" />
      </button>
      <button aria-label="Restaurar" className="flex w-[26px] items-center justify-center border-r border-[#55555c] bg-linear-to-b from-[#bcbcc0] via-[#8e8e94] to-[#a4a4a8]">
        <svg viewBox="0 0 12 12" className="size-3" fill="none" stroke="#444">
          <path d="M3.500.500h8v8h-8z" fill="#fff" />
          <path d="M.500 3.500h8v8h-8z" fill="#fff" />
          <path d="M3.500 6.500h2v2h-2z" />
        </svg>
      </button>
      <button aria-label="Cerrar" className="flex w-[46px] items-center justify-center bg-linear-to-b from-[#e0a090] via-[#c03818] to-[#d06040]">
        <svg viewBox="0 0 12 10" className="h-[10px] w-3" fill="none">
          <path d="M2.500 1.500l7 7M9.500 1.500l-7 7" stroke="#533" strokeWidth="4" />
          <path d="M2.500 1.500l7 7M9.500 1.500l-7 7" stroke="#fff" strokeWidth="2.400" />
        </svg>
      </button>
    </div>
  </header>
);

export default function App() {
  return (
    <div className="flex min-h-screen bg-white p-[60px] pt-10 pl-10 font-['DejaVu_Sans_Condensed','DejaVu_Sans',sans-serif] text-black">
      <div className="flex min-w-0 flex-1 flex-col rounded-t-md rounded-b-[3px] bg-[#f0f0f0] shadow-[8px_10px_26px_rgba(0,0,0,0.75)]">
        <TitleBar />
        <nav className="flex h-[22px] shrink-0 items-center gap-[13px] pt-[3px] pl-[9px] text-[11px] whitespace-nowrap">
          {menus.map(([a, b, c]) => (
            <button key={a + b + c}>
              {a}
              <u>{b}</u>
              {c}
            </button>
          ))}
        </nav>
        <Toolbar tools={fileTools} label="Archivo" />
        <Toolbar tools={editTools} label="Digitalización" />
        <Toolbar tools={advTools} label="Digitalización avanzada" />

        <main className="flex min-h-0 flex-1 border-t border-[#b4b4b4]">
          <aside role="toolbar" aria-label="Administrar capas" className="flex w-[52px] shrink-0 flex-col items-center pt-[5px]">
            <div className={`${DOTS_H} mb-px w-10`} />
            {layerTools.map((t) =>
              t.label === 'Nueva capa' ? (
                <div key={t.label} className="flex h-[34px] w-full items-center pl-2">
                  <button aria-label={t.label}><Icon>{t.icon}</Icon></button>
                  <button aria-label="Tipos de capa nueva" className="ml-[5px]"><Caret /></button>
                </div>
              ) : (
                <button key={t.label} aria-label={t.label} className="flex h-[34px] w-full items-center justify-center">
                  <Icon>{t.icon}</Icon>
                </button>
              ),
            )}
            <div className="flex h-[30px] w-full items-center"><More label="Más capas" /></div>
            <div className={`${DOTS_H} w-10`} />
            <button aria-label="Captura de coordenadas" className="flex h-8 items-center justify-center">
              <Icon>
                <path d="M14 0v9M14 15v9M0 12h10M18 12h6M14 11v2" stroke="#333" />
                <circle cx="14" cy="12" r="4.500" stroke="#b03030" strokeWidth="1.300" strokeDasharray="4 3" />
              </Icon>
            </button>
            <div className="mt-1 w-[41px] self-start"><More label="Más herramientas" /></div>
          </aside>

          <section className="w-[293px] shrink-0 border-l border-[#b4b4b4]">
            <DockHeader title="Capas" />
            <ul className="mt-[2px] h-[223px] border border-[#b0b0b0] bg-white pt-[2px]">
              {layers.map((l, i) => (
                <LayerRow key={l.name} layer={l} last={i === layers.length - 1} />
              ))}
            </ul>
            <div role="tablist" className="mt-px flex items-start text-[11px]">
              <button role="tab" aria-selected="true" className="h-[21px] w-[53px] rounded-b-[3px] border border-t-0 border-[#b0b0b0] bg-[#f4f4f4] pt-px">Capas</button>
              <button role="tab" aria-selected="false" className="h-[18px] w-[75px] rounded-b-[3px] border border-t-0 border-[#b0b0b0] border-b-[#9fb0d0] bg-linear-to-b from-[#ececec] to-[#dcdcdc] pt-px">Explorador</button>
            </div>
            <div className={`${DOTS_H} mx-auto mb-px w-[93px]`} />
            <DockHeader title="Ruta más corta" />
            <RoutePanel />
          </section>

          <div className="flex w-[7px] shrink-0 items-center justify-center pt-6 self-start h-[560px]">
            <span className="h-[184px] w-[5px] bg-[radial-gradient(circle_at_1px_1px,#bdbdbd_1px,transparent_1px),radial-gradient(circle_at_4px_4px,#bdbdbd_1px,transparent_1px)] bg-[length:6px_6px]" />
          </div>

          <div className="relative min-w-0 flex-1 border border-[#a8a8a8] bg-white">
            <div className="absolute inset-0 overflow-hidden">
              <MapCanvas />
            </div>
          </div>
        </main>
        <StatusBar />
      </div>
    </div>
  );
}
